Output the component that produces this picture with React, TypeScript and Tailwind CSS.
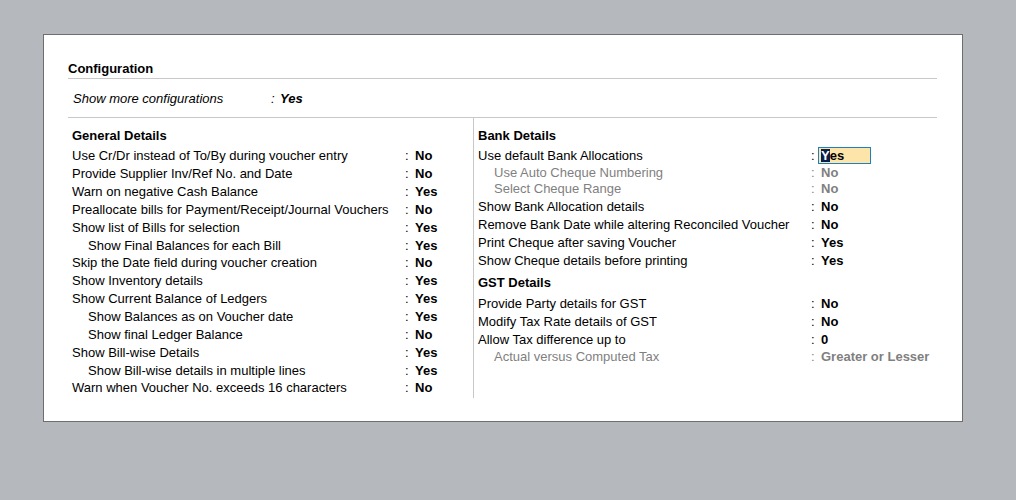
const L: [string, string, boolean?][] = [
  ["Use Cr/Dr instead of To/By during voucher entry", "No"],
  ["Provide Supplier Inv/Ref No. and Date", "No"],
  ["Warn on negative Cash Balance", "Yes"],
  ["Preallocate bills for Payment/Receipt/Journal Vouchers", "No"],
  ["Show list of Bills for selection", "Yes"],
  ["Show Final Balances for each Bill", "Yes", true],
  ["Skip the Date field during voucher creation", "No"],
  ["Show Inventory details", "Yes"],
  ["Show Current Balance of Ledgers", "Yes"],
  ["Show Balances as on Voucher date", "Yes", true],
  ["Show final Ledger Balance", "No", true],
  ["Show Bill-wise Details", "Yes"],
  ["Show Bill-wise details in multiple lines", "Yes", true],
  ["Warn when Voucher No. exceeds 16 characters", "No"],
];

function Row({ label, value, sub, dim, h = "h-[17.85px]", labelW = "w-[333px]" }: any) {
  return (
    <div className={`flex items-center ${h} ${dim ? "text-[#7f7f7f]" : "text-black"}`}>
      <div className={`${labelW} ${sub ? "pl-4" : ""}`}>{label}</div>
      <div className="w-[10px]">:</div>
      <div className="font-bold">{value}</div>
    </div>
  );
}

export default function App() {
  return (
    <div className="w-[1016px] h-[500px] bg-[#b5b8bc] pt-[34px] pl-[43px] text-[13px] leading-none" style={{ fontFamily: '"Liberation Sans", Arial, sans-serif' }}>
      <div className="w-[920px] h-[388px] bg-white border border-[#6e6e6e] pt-[24px] px-[24px]">
        <div className="w-[869px]">
          <div className="font-bold h-[20px] flex items-center border-b border-[#c8c8c8] pb-0 pl-0">Configuration</div>
          <div className="flex items-center h-[39px] border-b border-[#c8c8c8] pl-[5px] italic">
            <div className="w-[198px]">Show more configurations</div>
            <div className="w-[9px]">:</div>
            <div className="font-bold">Yes</div>
          </div>
          <div className="flex">
            <div className="w-[406px] pl-[4px] pt-[8px] h-[280px] border-r border-[#c8c8c8]">
              <div className="font-bold h-[18px] flex items-center mb-[3px]">General Details</div>
              {L.map(([a, b, s], i) => <Row key={i} label={a} value={b} sub={s} />)}
            </div>
            <div className="flex-1 pl-[4px] pt-[8px]">
              <div className="font-bold h-[18px] flex items-center mb-[3px]">Bank Details</div>
              <div className="flex items-center h-[17px]">
                <div className="w-[333px]">Use default Bank Allocations</div>
                <div className="w-[7px]">:</div>
                <div className="w-[53px] h-[17px] bg-[#fde4a8] border border-[#1e7fc1] flex items-center pl-[2px] font-bold">
                  <span className="bg-[#0b1f4d] text-white">Y</span>es
                </div>
              </div>
              <Row label="Use Auto Cheque Numbering" value="No" sub dim h="h-[16.5px]" />
              <Row label="Select Cheque Range" value="No" sub dim h="h-[16.5px]" />
              <Row label="Show Bank Allocation details" value="No" h="h-[18px]" />
              <Row label="Remove Bank Date while altering Reconciled Voucher" value="No" h="h-[18px]" />
              <Row label="Print Cheque after saving Voucher" value="Yes" h="h-[18px]" />
              <Row label="Show Cheque details before printing" value="Yes" h="h-[18px]" />
              <div className="font-bold h-[18px] flex items-center mt-[4px] mb-[3px]">GST Details</div>
              <Row label="Provide Party details for GST" value="No" h="h-[18px]" />
              <Row label="Modify Tax Rate details of GST" value="No" h="h-[18px]" />
              <Row label="Allow Tax difference up to" value="0" h="h-[18px]" />
              <Row label="Actual versus Computed Tax" value="Greater or Lesser" sub dim h="h-[17px]" />
            </div>
          </div>
        </div>
      </div>
    </div>
  );
}
